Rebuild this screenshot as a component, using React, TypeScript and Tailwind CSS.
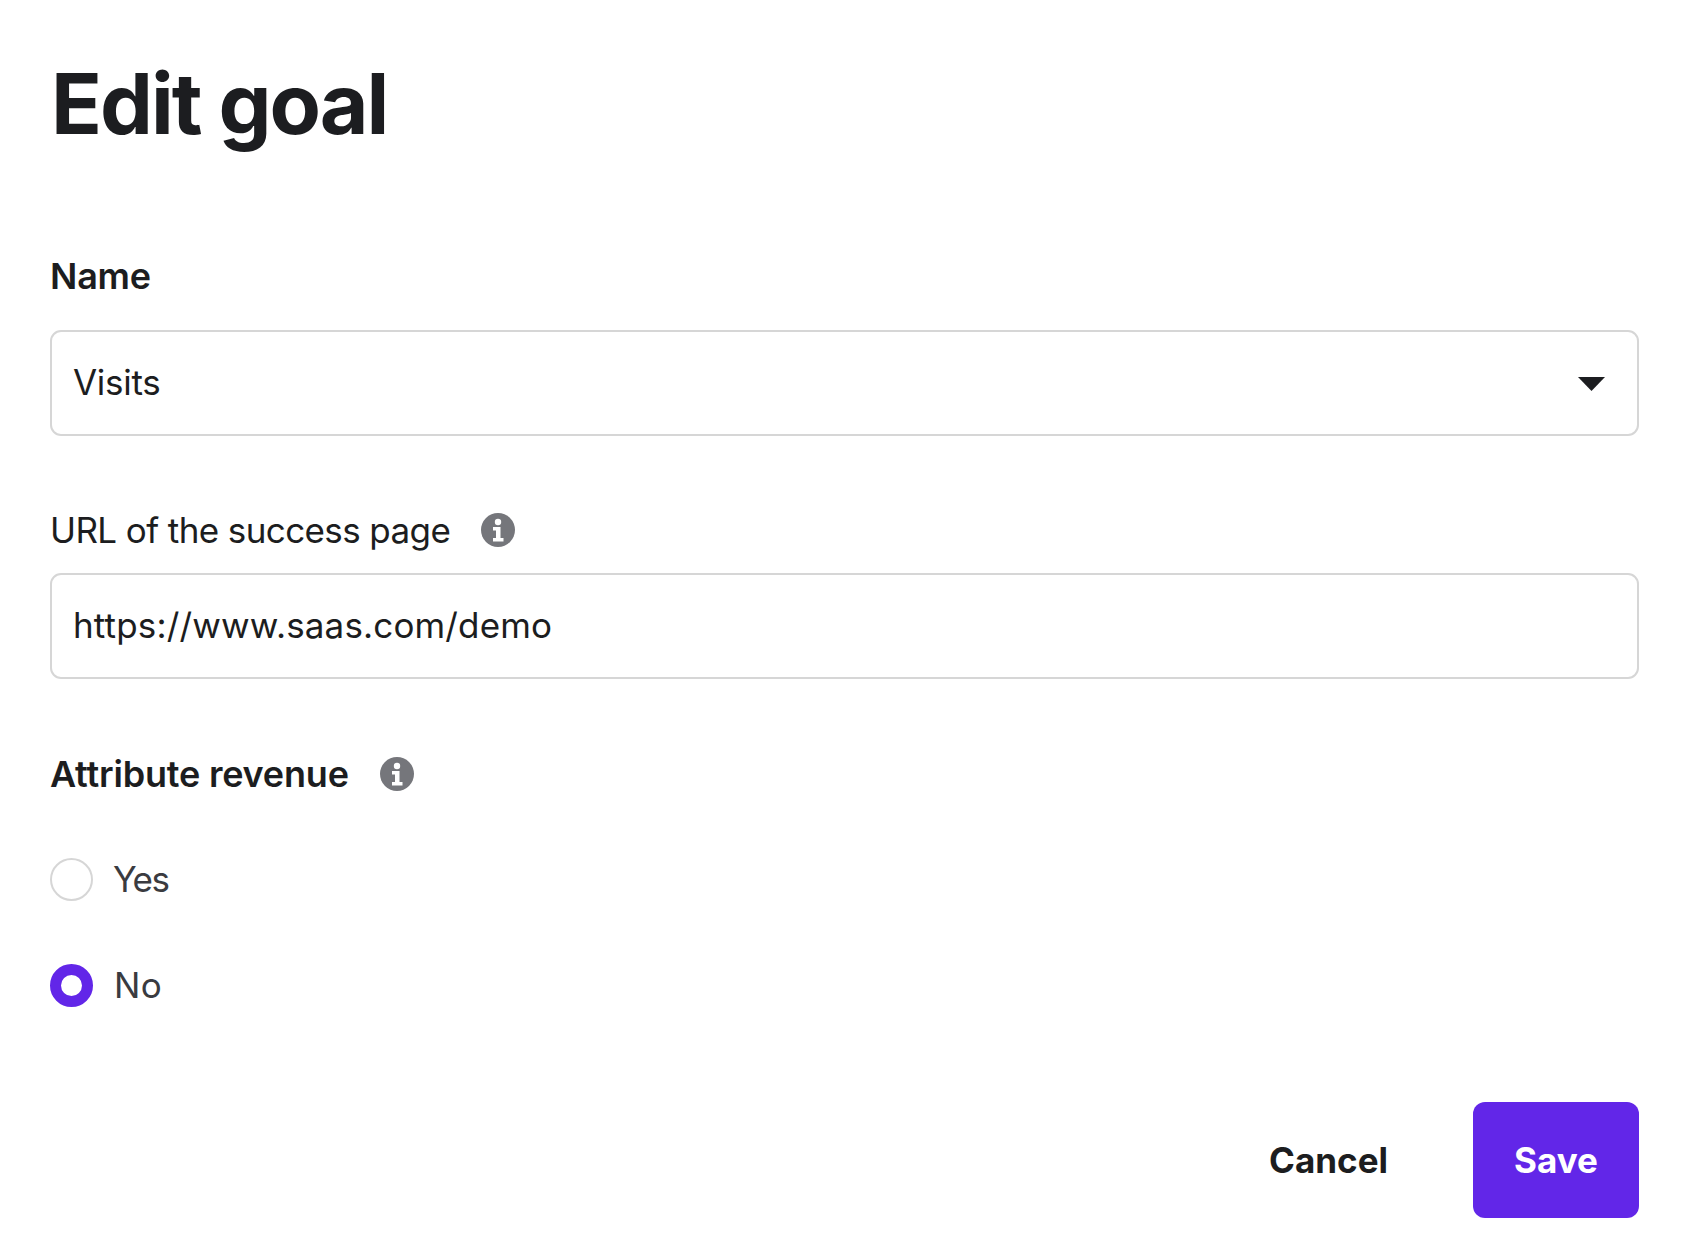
const font = "font-['Inter','Liberation_Sans',sans-serif]";

const InfoIcon = () => (
  <svg width="34" height="34" viewBox="0 0 34 34" className="shrink-0">
    <circle cx="17" cy="17" r="17" fill="#75767b" />
    <circle cx="17" cy="9" r="3.2" fill="#fff" />
    <path d="M12 14h7.500v11h3v3.500H12V25h3v-7.500h-3z" fill="#fff" />
  </svg>
);

const Radio = ({ label, checked, textClass }: { label: string; checked?: boolean; textClass: string }) => (
  <div className="flex items-center h-[43px] gap-[20px]">
    {checked ? (
      <span className="w-[43px] h-[43px] rounded-full border-[11px] border-[#6226e8] bg-white" />
    ) : (
      <span className="w-[43px] h-[43px] rounded-full border-2 border-[#d6d6d6] bg-white" />
    )}
    <span className={`text-[35px] leading-none text-[#3a3b40] ${textClass}`}>{label}</span>
  </div>
);

export default function App() {
  return (
    <div className={`${font} w-[1692px] h-[1234px] bg-white pl-[50px] pr-[53px] pt-[56px] text-[#1c1d20] overflow-hidden`}>
      <h1 className="text-[84px] leading-[96px] font-bold tracking-[-2px] pl-[1px]">Edit goal</h1>

      <div className="mt-[101px] text-[36px] leading-[46px] font-semibold tracking-[-0.2px]">Name</div>
      <div className="mt-[31px] h-[106px] border-2 border-[#d6d6d6] rounded-[11px] pl-[21px] pr-[32px] pb-[2px] flex items-center justify-between text-[35px]">
        <span className="tracking-[-0.3px]">Visits</span>
        <svg width="27" height="14" viewBox="0 0 27 14" className="mt-[3px]">
          <path d="M0 0h27L13.500 14z" fill="#1c1d20" />
        </svg>
      </div>

      <div className="mt-[71px] flex items-center gap-[31px] h-[46px]">
        <span className="text-[35px] leading-[46px] tracking-[-0.6px]">URL of the success page</span>
        <InfoIcon />
      </div>
      <div className="mt-[20px] h-[106px] border-2 border-[#d6d6d6] rounded-[11px] pl-[21px] pb-[2px] flex items-center text-[35px] tracking-[0.15px]">
        https://www.saas.com/demo
      </div>

      <div className="mt-[72px] flex items-center gap-[31px] h-[46px]">
        <span className="text-[36px] leading-[46px] font-semibold tracking-[-0.2px]">Attribute revenue</span>
        <InfoIcon />
      </div>

      <div className="mt-[61px] flex flex-col gap-[63px]">
        <Radio label="Yes" textClass="tracking-[-1.5px]" />
        <Radio label="No" checked textClass="tracking-[0.5px] ml-[1px]" />
      </div>

      <div className="mt-[95px] flex items-center justify-end gap-[85px]">
        <button className="text-[35px] font-bold text-[#1c1d20]">Cancel</button>
        <button className="w-[166px] h-[116px] rounded-[12px] bg-[#6226e8] text-white text-[35px] font-bold">Save</button>
      </div>
    </div>
  );
}
